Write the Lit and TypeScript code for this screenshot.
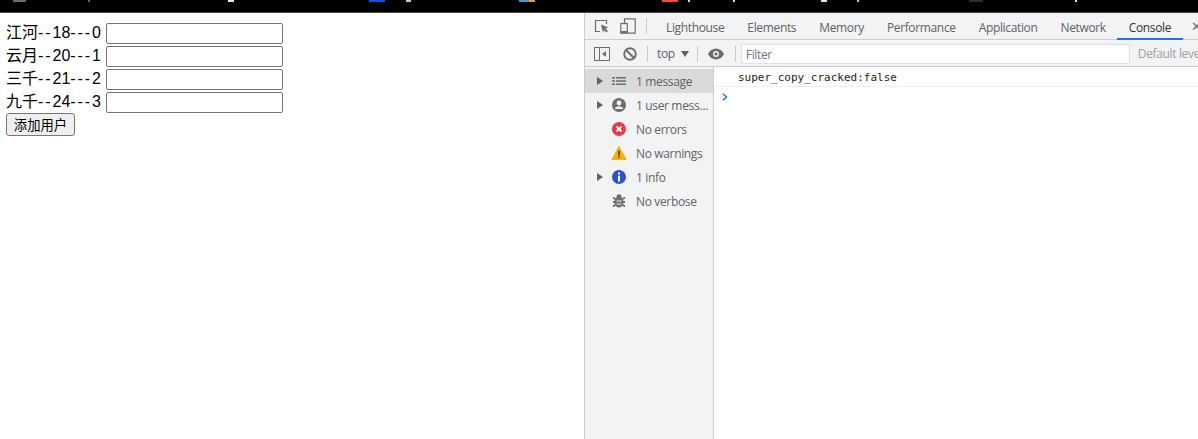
import { LitElement, html, css, svg } from "lit";
import { customElement } from "lit/decorators.js";

const users = [
  ["江河", 18, 0],
  ["云月", 20, 1],
  ["三千", 21, 2],
  ["九千", 24, 3],
];

const marks: [number, number, string][] = [
  [13, 13, "#6a6a6a"],
  [62, 2, "#5a6a8a"],
  [138, 6, "#e8e8e8"],
  [135, 16, "#0a58d6"],
  [21, 5, "#c8c8c8"],
  [108, 10, "#3f9bd0"],
  [0, 6, "#f29a38"],
  [127, 16, "#e8502f"],
  [10, 2, "#e0d0b0"],
  [43, 2, "#d8d8d8"],
  [86, 6, "#e0e0e0"],
  [30, 2, "#d8c8a0"],
  [110, 14, "#2e2e2e"],
  [92, 2, "#d8d8d8"],
];

const arrow = svg`<svg class="arrow" width="6" height="8" viewBox="0 0 6 8"><path d="M0 0l6 4-6 4z" fill="#5f6368"/></svg>`;

const sideItems = [
  {
    label: "1 message",
    arrow: true,
    active: true,
    icon: svg`<svg width="16" height="16" viewBox="0 0 16 16" fill="#6e6e6e"><path d="M1 4h3v1.600H1zM5 4h10v1.600H5zM1 7.200h3v1.600H1zM5 7.200h10v1.600H5zM1 10.400h3v1.600H1zM5 10.400h10v1.600H5z"/></svg>`,
  },
  {
    label: "1 user mess…",
    arrow: true,
    icon: svg`<svg width="16" height="16" viewBox="0 0 16 16"><circle cx="8" cy="8" r="7" fill="#6e6e6e"/><circle cx="8" cy="6" r="2.400" fill="#f1f3f4"/><path d="M3.800 12c.6-2 2.200-2.800 4.200-2.800s3.600.8 4.200 2.800z" fill="#f1f3f4"/></svg>`,
  },
  {
    label: "No errors",
    icon: svg`<svg width="16" height="16" viewBox="0 0 16 16"><circle cx="8" cy="8" r="7" fill="#eb3941"/><path d="M5.500 5.500l5 5M10.500 5.500l-5 5" stroke="#fff" stroke-width="1.800"/></svg>`,
  },
  {
    label: "No warnings",
    icon: svg`<svg width="16" height="16" viewBox="0 0 16 16"><path d="M8 .5l7.800 14.500H.2z" fill="#f4b400"/><path d="M7.200 5.500h1.600v5H7.200zM7.200 11.500h1.600v1.600H7.200z" fill="#3c3c3c"/></svg>`,
  },
  {
    label: "1 info",
    arrow: true,
    icon: svg`<svg width="16" height="16" viewBox="0 0 16 16"><circle cx="8" cy="8" r="7" fill="#2a53cd"/><path d="M7 3.500h2v2H7zM7 6.800h2v5.700H7z" fill="#fff"/></svg>`,
  },
  {
    label: "No verbose",
    icon: svg`<svg width="16" height="16" viewBox="0 0 16 16" fill="#6e6e6e"><ellipse cx="8" cy="9" rx="4.500" ry="5.500"/><circle cx="8" cy="3.800" r="2.500"/><path d="M2 4.500l3 2M14 4.500l-3 2M2 9h3M11 9h3M2 13.500l3-2M14 13.500l-3-2" stroke="#6e6e6e" stroke-width="1.800"/><path d="M5.500 8h5M5.500 11h5" stroke="#f1f3f4" stroke-width="1"/></svg>`,
  },
];

@customElement("app-root")
export class AppRoot extends LitElement {
  static styles = css`
    :host {
      display: block;
      width: 1198px;
      height: 439px;
      overflow: hidden;
      background: #fff;
      font-family: "Liberation Sans", "Noto Sans CJK SC", sans-serif;
    }
    .topbar {
      height: 12px;
      background: #000;
      border-bottom: 1px solid #4a4a4a;
      display: flex;
      align-items: flex-start;
    }
    .mark {
      height: 2px;
      flex: none;
    }
    .main {
      display: flex;
      height: 426px;
    }
    .page {
      width: 578px;
      flex: none;
      padding: 8px 0 0 6px;
      font-size: 16px;
      line-height: 23px;
      color: #000;
    }
    .row {
      display: flex;
      align-items: center;
      height: 23px;
    }
    .label {
      width: 100px;
      flex: none;
      white-space: nowrap;
    }
    .dash {
      letter-spacing: 1.9px;
    }
    .row input {
      width: 177px;
      height: 21px;
      box-sizing: border-box;
      margin: 0;
      padding: 1px 2px;
      border: 1px solid #767676;
      border-radius: 2px;
      background: #fff;
      align-self: flex-end;
    }
    button {
      display: block;
      width: 69px;
      height: 23px;
      box-sizing: border-box;
      padding: 0;
      margin: 0;
      border: 1px solid #767676;
      border-radius: 3px;
      background: #efefef;
      font: 13.333px "Liberation Sans", "Noto Sans CJK SC", sans-serif;
      color: #000;
    }
    .devtools {
      flex: 1;
      min-width: 0;
      border-left: 1px solid #cbcdd1;
      display: flex;
      flex-direction: column;
      font-family: "Open Sans", "Noto Sans", sans-serif;
      font-size: 12px;
      letter-spacing: -0.35px;
      color: #5f6368;
      overflow: hidden;
    }
    .tabs {
      height: 26px;
      background: #f1f3f4;
      border-bottom: 1px solid #cbcdd1;
      display: flex;
      align-items: center;
      flex: none;
      white-space: nowrap;
    }
    .ic {
      display: flex;
      flex: none;
    }
    .sep {
      width: 1px;
      height: 16px;
      background: #ccc;
      flex: none;
    }
    .tab {
      flex: none;
      height: 27px;
      line-height: 29px;
      padding: 0 11.5px;
      box-sizing: border-box;
      white-space: nowrap;
      align-self: flex-start;
    }
    .tab.on {
      color: #333;
      border-bottom: 2px solid #1a73e8;
    }
    .close {
      font-size: 13px;
      margin-left: 8px;
      color: #6e6e6e;
      flex: none;
    }
    .bar {
      height: 25px;
      padding-top: 1px;
      background: #f1f3f4;
      border-bottom: 1px solid #cbcdd1;
      display: flex;
      align-items: center;
      flex: none;
      white-space: nowrap;
      overflow: hidden;
    }
    .caret {
      flex: none;
      margin-left: 6px;
    }
    .filter {
      width: 389px;
      height: 20px;
      box-sizing: border-box;
      flex: none;
      background: #fff;
      border: 1px solid #dfe1e4;
      padding-left: 4px;
      line-height: 19px;
      color: #70757a;
      margin: 0 8px 0 5px;
    }
    .levels {
      color: #9aa0a6;
      flex: none;
    }
    .body {
      flex: 1;
      display: flex;
      min-height: 0;
    }
    .side {
      width: 128px;
      flex: none;
      background: #f1f3f4;
      border-right: 1px solid #cbcdd1;
      padding-top: 2px;
    }
    .item {
      height: 24px;
      display: flex;
      align-items: center;
      white-space: nowrap;
    }
    .item.on {
      background: #dadada;
    }
    .arrow-slot {
      width: 26px;
      flex: none;
      display: flex;
      justify-content: center;
      padding-left: 4px;
      box-sizing: border-box;
    }
    .item .ic {
      margin-right: 9px;
    }
    .console {
      flex: 1;
      min-width: 0;
      background: #fff;
    }
    .log {
      height: 20px;
      box-sizing: border-box;
      border-bottom: 1px solid #f0f0f0;
      padding-left: 24px;
      font: 11px/22px "DejaVu Sans Mono", monospace;
      letter-spacing: 0;
      color: #222;
    }
    .prompt {
      padding: 6px 0 0 8px;
      display: flex;
    }
  `;

  render() {
    return html`
      <div class="topbar">
        ${marks.map(
          ([gap, w, c]) =>
            html`<div class="mark" style="margin-left:${gap}px;width:${w}px;background:${c}"></div>`
        )}
      </div>
      <div class="main">
        <div class="page">
          ${users.map(
            ([n, a, i]) =>
              html`<div class="row">
                <span class="label">${n}<span class="dash">--</span>${a}<span class="dash">---</span>${i}</span
                ><input type="text" />
              </div>`
          )}
          <button>添加用户</button>
        </div>
        <div class="devtools">
          <div class="tabs">
            <span class="ic" style="margin-left:9px"
              ><svg width="16" height="16" viewBox="0 0 16 16" fill="none">
                <path d="M6 13.500H1.500v-11h11V6" stroke="#6e6e6e" stroke-width="1.200" />
                <path d="M7 6.500l7.500 3-3 1 2.500 2.500-1.500 1.500-2.500-2.500-1 3z" fill="#6e6e6e" /></svg
            ></span>
            <span class="ic" style="margin-left:10px"
              ><svg width="16" height="16" viewBox="0 0 16 16" fill="none">
                <path d="M4.500 5V.8h10.700v14.400H8" stroke="#6e6e6e" stroke-width="1.200" />
                <rect x=".8" y="5.500" width="6.500" height="9.700" stroke="#6e6e6e" stroke-width="1.200" />
                <rect x=".8" y="13" width="6.500" height="2.200" fill="#6e6e6e" /></svg
            ></span>
            <span class="sep" style="margin-left:10px"></span>
            <span class="tab" style="margin-left:7.5px">Lighthouse</span>
            <span class="tab">Elements</span>
            <span class="tab">Memory</span>
            <span class="tab">Performance</span>
            <span class="tab">Application</span>
            <span class="tab">Network</span>
            <span class="tab on">Console</span>
            <span class="close">✕</span>
          </div>
          <div class="bar">
            <span class="ic" style="margin-left:9px"
              ><svg width="16" height="16" viewBox="0 0 16 16" fill="none">
                <rect x=".5" y="1.500" width="15" height="13" stroke="#6e6e6e" />
                <path d="M5.500 1.500v13" stroke="#6e6e6e" />
                <path d="M12 5v6L8 8z" fill="#6e6e6e" /></svg
            ></span>
            <span class="ic" style="margin-left:12px"
              ><svg width="16" height="16" viewBox="0 0 16 16" fill="none">
                <circle cx="8" cy="8" r="5.800" stroke="#6e6e6e" stroke-width="1.900" />
                <path d="M4 4l8 8" stroke="#6e6e6e" stroke-width="1.900" /></svg
            ></span>
            <span class="sep" style="margin-left:9px"></span>
            <span style="margin-left:9px">top</span>
            <svg class="caret" width="8" height="6" viewBox="0 0 8 6"><path d="M0 0h8L4 6z" fill="#5f6368" /></svg>
            <span class="sep" style="margin-left:8px"></span>
            <span class="ic" style="margin-left:10px"
              ><svg width="16" height="12" viewBox="0 0 16 12">
                <path fill-rule="evenodd" fill="#6e6e6e" d="M8 .5c3.500 0 6.500 2.200 8 5.500-1.500 3.300-4.500 5.500-8 5.500S1.500 9.300 0 6C1.500 2.700 4.500.5 8 .5zM8 3a3 3 0 100 6 3 3 0 000-6z" />
                <circle cx="8" cy="6" r="1.600" fill="#6e6e6e" /></svg
            ></span>
            <span class="sep" style="margin-left:11px"></span>
            <div class="filter">Filter</div>
            <span class="levels">Default levels ▾</span>
          </div>
          <div class="body">
            <div class="side">
              ${sideItems.map(
                (it) => html`<div class="item ${it.active ? "on" : ""}">
                  <span class="arrow-slot">${it.arrow ? arrow : ""}</span>
                  <span class="ic">${it.icon}</span>
                  <span>${it.label}</span>
                </div>`
              )}
            </div>
            <div class="console">
              <div class="log">super_copy_cracked:false</div>
              <div class="prompt">
                <svg width="6" height="8" viewBox="0 0 6 8" fill="none"><path d="M1 .8L4.500 4 1 7.200" stroke="#2a6fdb" stroke-width="1.500" /></svg>
              </div>
            </div>
          </div>
        </div>
      </div>
    `;
  }
}
